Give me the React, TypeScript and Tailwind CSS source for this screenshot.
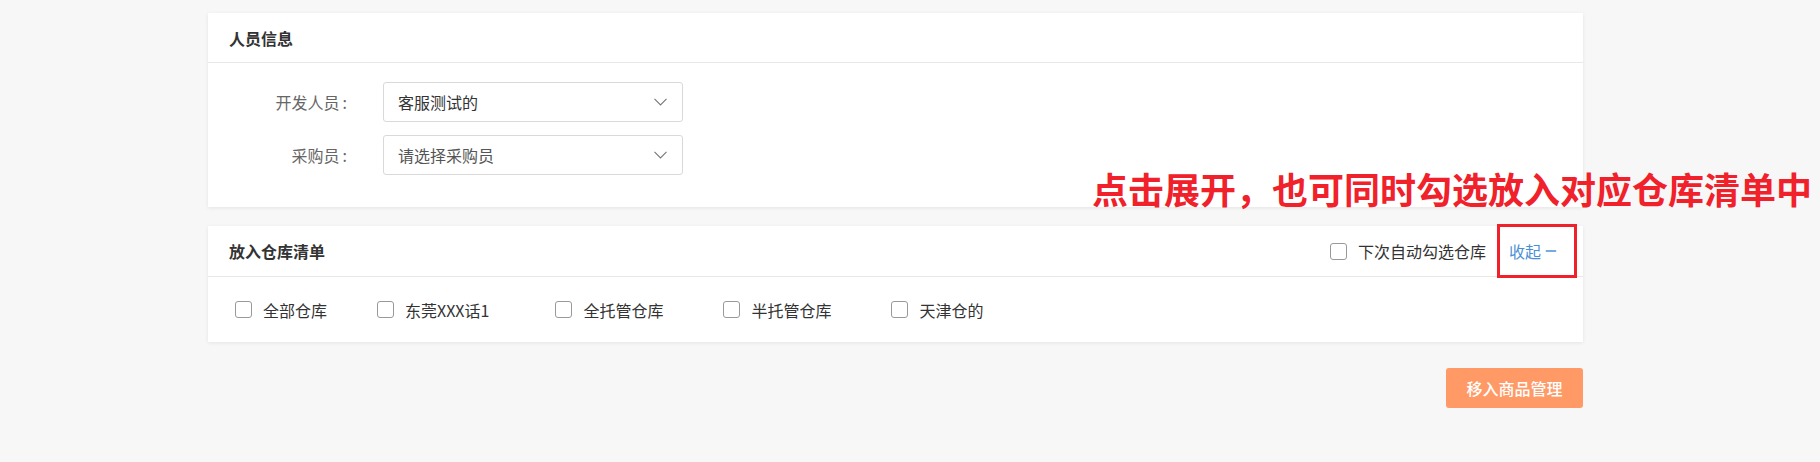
import { Minus } from 'lucide-react'

const font = { fontFamily: '"Noto Sans CJK SC", "Noto Sans", sans-serif' }

function Select({ value, placeholder }: { value?: string; placeholder?: string }) {
  return (
    <div className="ml-[36px] flex h-[40px] w-[300px] items-center justify-between rounded-[3px] border border-[#d9d9d9] bg-white pl-[14px] pr-[15px]">
      <span className={value ? 'text-[16px] text-[#333]' : 'text-[16px] text-[#555]'}>{value ?? placeholder}</span>
      <svg width="13" height="8" viewBox="0 0 13 8" fill="none" className="text-[#777]">
        <path d="M0.5 0.8 L6.5 7 L12.5 0.8" stroke="currentColor" strokeWidth="1.1" />
      </svg>
    </div>
  )
}

function FormRow({ label, children }: { label: string; children: React.ReactNode }) {
  return (
    <div className="flex items-center">
      <div className="w-[139px] text-right text-[16px] text-[#666]">
        {label}
        <span className="ml-[3px]">:</span>
      </div>
      {children}
    </div>
  )
}

function Checkbox({ label, className }: { label: string; className?: string }) {
  return (
    <label className={'flex items-center ' + (className ?? '')}>
      <span className="h-[17px] w-[17px] rounded-[3px] border border-[#999] bg-white" />
      <span className="ml-[11px] text-[16px] text-[#333]">{label}</span>
    </label>
  )
}

export default function App() {
  return (
    <div className="relative h-[462px] w-full bg-[#f7f7f7]" style={font}>
      <div className="ml-[208px] w-[1375px] pt-[13px]">
        {/* 人员信息 */}
        <div className="bg-white shadow-[0_1px_4px_rgba(0,0,0,0.08)]">
          <div className="flex h-[50px] items-center border-b border-[#e8e8e8] px-[21px]">
            <h2 className="text-[16px] font-bold text-[#333]">人员信息</h2>
          </div>
          <div className="flex flex-col gap-[13px] pb-[32px] pt-[19px]">
            <FormRow label="开发人员">
              <Select value="客服测试的" />
            </FormRow>
            <FormRow label="采购员">
              <Select placeholder="请选择采购员" />
            </FormRow>
          </div>
        </div>

        {/* 放入仓库清单 */}
        <div className="mt-[19px] bg-white shadow-[0_1px_4px_rgba(0,0,0,0.08)]">
          <div className="flex h-[51px] items-center justify-between border-b border-[#e8e8e8] pl-[21px] pr-[24px]">
            <h2 className="text-[16px] font-bold text-[#333]">放入仓库清单</h2>
            <div className="flex items-center">
              <Checkbox label="下次自动勾选仓库" />
              <a href="#" className="ml-[23px] flex items-center text-[16px] text-[#4a8fd6]">
                收起
                <Minus className="ml-[2px] h-[16px] w-[16px]" strokeWidth={2.2} />
              </a>
            </div>
          </div>
          <div className="flex h-[65px] items-center pl-[27px]">
            <Checkbox label="全部仓库" className="mr-[50px]" />
            <Checkbox label="东莞XXX话1" className="mr-[66px]" />
            <Checkbox label="全托管仓库" className="mr-[60px]" />
            <Checkbox label="半托管仓库" className="mr-[60px]" />
            <Checkbox label="天津仓的" />
          </div>
        </div>

        <div className="mt-[26px] flex justify-end">
          <button className="h-[40px] w-[137px] rounded-[3px] bg-[#ff9966] text-[16px] font-medium text-white">
            移入商品管理
          </button>
        </div>
      </div>

      {/* annotation */}
      <div className="absolute left-[1092px] top-[170px] text-[36px] font-bold leading-none text-[#f0212b]">
        点击展开，也可同时勾选放入对应仓库清单中
      </div>
      <div className="absolute left-[1497px] top-[224px] h-[54px] w-[80px] border-[3px] border-[#f0212b]" />
    </div>
  )
}
